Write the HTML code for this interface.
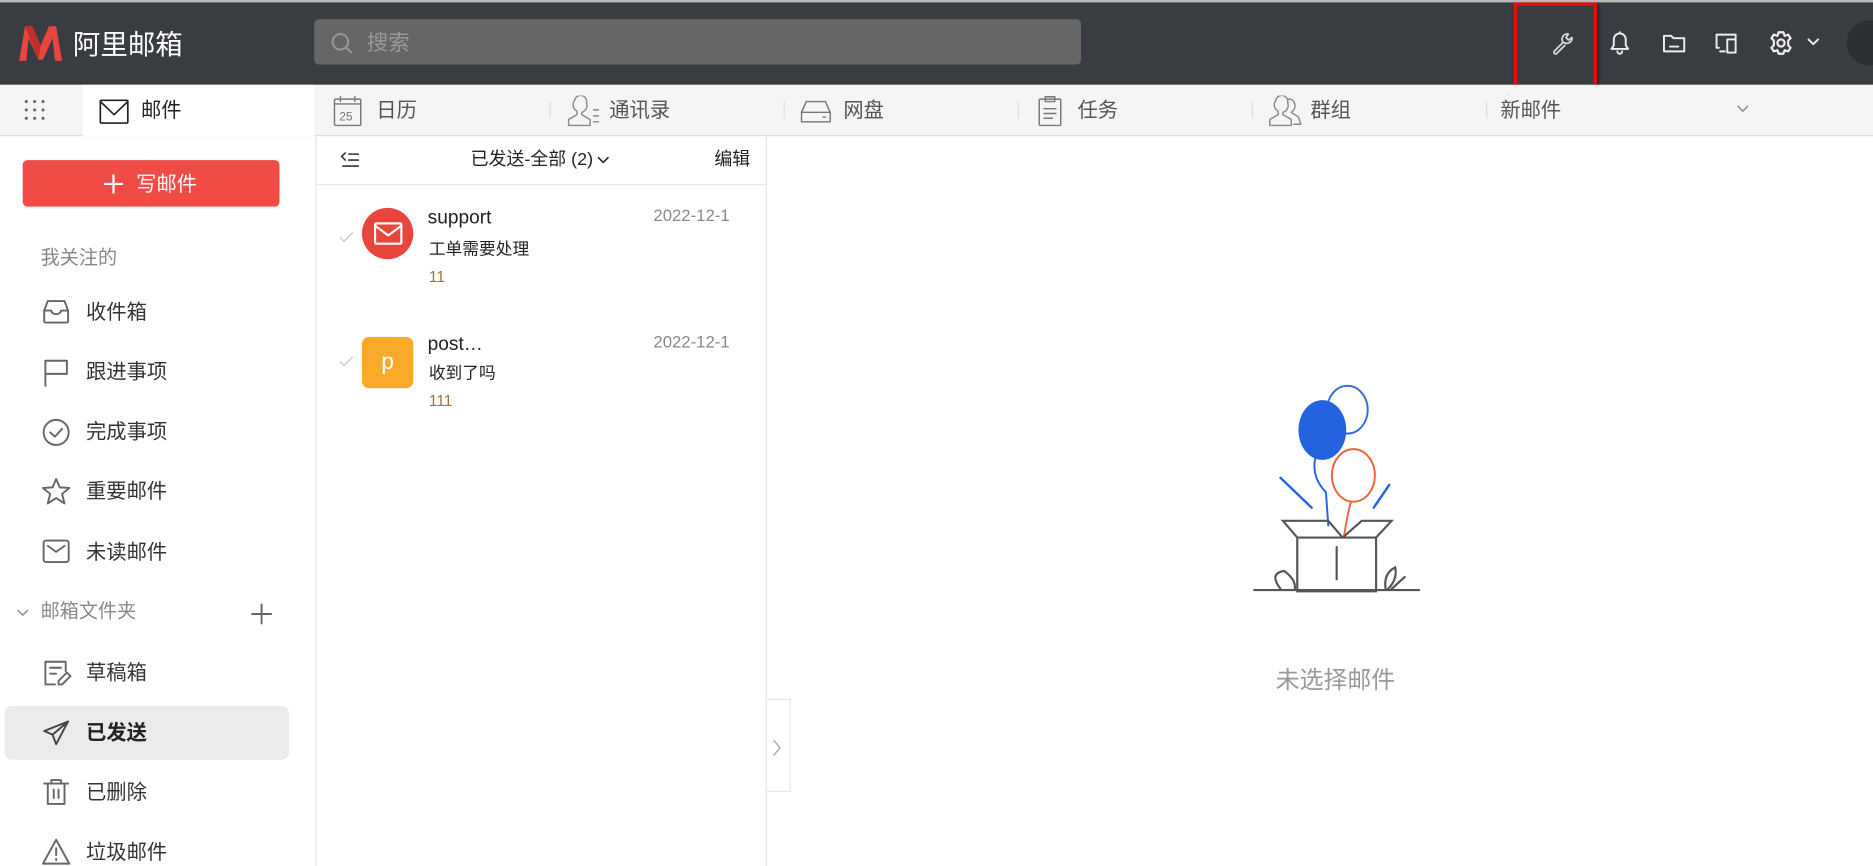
<!DOCTYPE html>
<html><head><meta charset="utf-8"><style>
html,body{margin:0;padding:0;width:1873px;height:865px;overflow:hidden;background:#fff}
#w{position:absolute;left:0;top:0;width:1568px;height:725px;transform:scale(1.19452);transform-origin:0 0;font-family:"Liberation Sans","Noto Sans CJK SC",sans-serif;color:#333}
.a{position:absolute}
.ic{position:absolute;fill:none;stroke:#666;stroke-width:1.6;stroke-linecap:round;stroke-linejoin:round}
.t{position:absolute;font-size:17px;color:#333;white-space:nowrap;line-height:20px}
.tab{position:absolute;top:83px;font-size:17px;color:#555;line-height:20px}
.sep{position:absolute;top:85px;width:1px;height:14px;background:#ddd}
</style></head><body><div id="w">
<div class="a" style="left:0;top:0;width:1568px;height:71px;background:#393d42;border-top:2px solid #bbb;box-sizing:border-box"></div>
<svg class="a" style="left:14px;top:20px" width="40" height="32" viewBox="0 0 40 32"><path d="M2 31 L7 2 L13 2 L20 18 L27 2 L33 2 L38 31 L32 31 L30 12 L22 30 L18 30 L10 12 L8 31 Z" fill="#e8453c"/><path d="M7 2 L13 2 L20 18 L18 30 Z" fill="#c0302a"/></svg>
<div class="a" style="left:61px;top:23px;font-size:23px;color:#fff;line-height:28px">阿里邮箱</div>
<div class="a" style="left:263px;top:16px;width:642px;height:38px;background:#666;border-radius:4px"></div>
<svg class="ic" style="left:276px;top:26px;stroke:#999" width="20" height="20"><circle cx="9" cy="9" r="6.5"/><path d="M14 14 L18 18"/></svg>
<div class="a" style="left:307px;top:25px;font-size:18px;color:#999;line-height:22px">搜索</div>
<div class="a" style="left:1267px;top:2px;width:64px;height:69px;border:3px solid #e01010;box-shadow:1px 2px 3px rgba(0,0,0,.5)"></div>
<svg class="ic" style="left:1297px;top:25px;stroke:#ddd;stroke-width:1.4" width="22" height="22"><path d="M4 18 L11.5 10.5 M11.5 10.5 A4.5 4.5 0 0 1 16 3.5 L14 6.5 L16 8.5 L19 6.5 A4.5 4.5 0 0 1 12 10.5 M4 18 A1.5 1.5 0 0 0 6 20 L13 13 "/></svg>
<svg class="ic" style="left:1345px;top:25px;stroke:#eee" width="22" height="22"><path d="M4 16 L18 16 L16 13 L16 8 A5 5 0 0 0 6 8 L6 13 Z M9 18 A2 2 0 0 0 13 18 M11 3 L11 2"/></svg>
<svg class="ic" style="left:1391px;top:26px;stroke:#eee" width="22" height="20"><path d="M2 4 L8 4 L10 6 L19 6 L19 17 L2 17 Z M7 13 L14 13"/></svg>
<svg class="ic" style="left:1435px;top:25px;stroke:#eee" width="22" height="22"><path d="M4 15 L2 15 L2 4 L18 4 L18 7 M5 18 L9 18 M11 8 L18 8 L18 19 L11 19 Z"/></svg>
<svg class="ic" style="left:1480px;top:25px;stroke:#eee;stroke-width:1.8" width="22" height="22"><circle cx="11" cy="11" r="3"/><path d="M9 2 L13 2 L14 5 L17 4 L19 7 L17 9 L17 13 L19 15 L17 18 L14 17 L13 20 L9 20 L8 17 L5 18 L3 15 L5 13 L5 9 L3 7 L5 4 L8 5 Z"/></svg>
<svg class="ic" style="left:1512px;top:31px;stroke:#eee" width="12" height="8"><path d="M2 2 L6 6 L10 2"/></svg>
<div class="a" style="left:1546px;top:17px;width:38px;height:38px;border-radius:50%;background:#2c2f33"></div>
<div class="a" style="left:0;top:71px;width:1568px;height:42px;background:#f5f5f5;border-bottom:1px solid #ddd"></div>
<svg class="a" style="left:20px;top:83px" width="20" height="20"><g fill="#666"><circle cx="2" cy="2" r="1.3"/><circle cx="9" cy="2" r="1.3"/><circle cx="16" cy="2" r="1.3"/><circle cx="2" cy="9" r="1.3"/><circle cx="9" cy="9" r="1.3"/><circle cx="16" cy="9" r="1.3"/><circle cx="2" cy="16" r="1.3"/><circle cx="16" cy="16" r="1.3"/><circle cx="9" cy="16" r="1.3"/></g></svg>
<div class="a" style="left:69px;top:71px;width:194px;height:43px;background:#fff"></div>
<svg class="ic" style="left:83px;top:83px;stroke:#222;stroke-width:1.4" width="26" height="22"><rect x="1" y="1" width="23" height="19" rx="1"/><path d="M1 2 L12.5 13 L24 2"/></svg>
<div class="tab" style="left:118px;color:#222">邮件</div>
<svg class="ic" style="left:278px;top:79px;stroke:#777;stroke-width:1.2" width="26" height="28"><rect x="2" y="4" width="22" height="22" rx="1"/><path d="M2 8 L24 8 M7 2 L7 6 M19 2 L19 6"/><text x="6" y="22" font-size="10" fill="#777" stroke="none" font-family="Liberation Sans">25</text></svg>
<div class="tab" style="left:315px">日历</div>
<div class="sep" style="left:460px"></div>
<svg class="ic" style="left:473px;top:80px;stroke:#888;stroke-width:1.2" width="32" height="26"><path d="M3 25 L3 20 L10 16 L10 13 A6 6 0 0 1 8 4 A5 5 0 0 1 18 6 A6 6 0 0 1 14 14 L14 16 L21 20 L21 25 Z M24 12 L28 12 M24 17 L28 17 M24 22 L28 22"/></svg>
<div class="tab" style="left:510px">通讯录</div>
<div class="sep" style="left:656px"></div>
<svg class="ic" style="left:669px;top:82px;stroke:#777;stroke-width:1.2" width="28" height="22"><path d="M2 12 L6 3 L22 3 L26 12 L26 20 L2 20 Z M2 12 L26 12 M20 16 L22 16"/></svg>
<div class="tab" style="left:706px">网盘</div>
<div class="sep" style="left:852px"></div>
<svg class="ic" style="left:868px;top:79px;stroke:#777;stroke-width:1.2" width="22" height="28"><rect x="2" y="4" width="18" height="22" rx="1"/><rect x="7" y="2" width="8" height="4"/><path d="M6 12 L16 12 M6 16 L16 16 M6 20 L13 20"/></svg>
<div class="tab" style="left:902px">任务</div>
<div class="sep" style="left:1048px"></div>
<svg class="ic" style="left:1060px;top:80px;stroke:#888;stroke-width:1.2" width="32" height="26"><path d="M3 25 L3 20 L10 16 L10 13 A6 6 0 0 1 8 4 A5 5 0 0 1 18 6 A6 6 0 0 1 14 14 L14 16 L21 20 L21 25 Z M18 3 A5 5 0 0 1 24 8 A6 6 0 0 1 21 14 L27 18 L29 24 L23 24"/></svg>
<div class="tab" style="left:1097px">群组</div>
<div class="sep" style="left:1244px"></div>
<div class="tab" style="left:1256px">新邮件</div>
<svg class="ic" style="left:1453px;top:87px;stroke:#888;stroke-width:1.2" width="12" height="8"><path d="M2 2 L6 6 L10 2"/></svg>
<div class="a" style="left:264px;top:114px;width:1px;height:611px;background:#e6e6e6"></div>
<div class="a" style="left:641px;top:114px;width:1px;height:611px;background:#e6e6e6"></div>
<div class="a" style="left:19px;top:134px;width:215px;height:39px;background:#f04b45;border-radius:4px"></div>
<svg class="a" style="left:86px;top:145px" width="18" height="18"><path d="M9 1 L9 17 M1 9 L17 9" stroke="#fff" stroke-width="1.8"/></svg>
<div class="a" style="left:114px;top:145px;font-size:17px;color:#fff;line-height:20px">写邮件</div>
<div class="t" style="left:34px;top:207px;font-size:16px;color:#888">我关注的</div>
<svg class="ic" style="left:35px;top:250px" width="24" height="22"><path d="M2 10 L5 2 L19 2 L22 10 L22 19 A1 1 0 0 1 21 20 L3 20 A1 1 0 0 1 2 19 Z M2 10 L8 10 A4 3 0 0 0 16 10 L22 10"/></svg>
<div class="t" style="left:72px;top:252px">收件箱</div>
<svg class="ic" style="left:36px;top:300px" width="24" height="24"><path d="M2 23 L2 2 L20 2 L20 13 L2 13"/></svg>
<div class="t" style="left:72px;top:302px">跟进事项</div>
<svg class="ic" style="left:35px;top:350px" width="24" height="24"><circle cx="12" cy="12" r="10.5"/><path d="M7 12 L11 15.5 L17 9"/></svg>
<div class="t" style="left:72px;top:352px">完成事项</div>
<svg class="ic" style="left:34px;top:399px" width="26" height="25"><path d="M13 2 L16 9 L24 9.5 L18 14.5 L20 22.5 L13 18 L6 22.5 L8 14.5 L2 9.5 L10 9 Z"/></svg>
<div class="t" style="left:72px;top:402px">重要邮件</div>
<svg class="ic" style="left:35px;top:451px" width="24" height="22"><rect x="1.5" y="1.5" width="21" height="18" rx="2"/><path d="M5 6 L12 11 L19 6"/></svg>
<div class="t" style="left:72px;top:453px">未读邮件</div>
<svg class="ic" style="left:14px;top:509px;stroke:#888;stroke-width:1.2" width="10" height="8"><path d="M1 2 L5 6 L9 2"/></svg>
<div class="t" style="left:34px;top:503px;font-size:16px;color:#888">邮箱文件夹</div>
<svg class="ic" style="left:209px;top:504px;stroke:#666" width="20" height="20"><path d="M10 2 L10 18 M2 10 L18 10"/></svg>
<svg class="ic" style="left:36px;top:552px" width="24" height="24"><path d="M19 10 L19 2 L2 2 L2 21 L10 21 M6 7 L15 7 M6 12 L11 12 M13 21 L13 18 L20 11 L23 14 L16 21 Z"/></svg>
<div class="t" style="left:72px;top:554px">草稿箱</div>
<div class="a" style="left:4px;top:591px;width:238px;height:45px;background:#ebebeb;border-radius:6px"></div>
<svg class="ic" style="left:35px;top:602px;stroke:#444" width="24" height="24"><path d="M22 2 L2 10 L9 13 L12 21 Z M22 2 L9 13"/></svg>
<div class="t" style="left:72px;top:604px;font-weight:bold;color:#222">已发送</div>
<svg class="ic" style="left:36px;top:651px" width="22" height="24"><path d="M1 5 L21 5 M7 5 L7 2 L15 2 L15 5 M4 5 L4 22 L18 22 L18 5 M9 10 L9 17 M13 10 L13 17"/></svg>
<div class="t" style="left:72px;top:654px">已删除</div>
<svg class="ic" style="left:34px;top:701px" width="26" height="24"><path d="M13 2 L24 22 L2 22 Z M13 9 L13 15 M13 18 L13 19"/></svg>
<div class="t" style="left:72px;top:704px">垃圾邮件</div>
<div class="a" style="left:265px;top:154px;width:376px;height:1px;background:#e6e6e6"></div>
<svg class="ic" style="left:284px;top:126px;stroke:#333;stroke-width:1.3" width="18" height="16"><path d="M5 2 L2 5 L5 8 M8 3 L16 3 M8 8 L16 8 M3 13 L16 13"/></svg>
<div class="a" style="left:394px;top:125px;font-size:15px;color:#222;line-height:18px">已发送-全部 (2)</div>
<svg class="ic" style="left:500px;top:131px;stroke:#222;stroke-width:1.3" width="10" height="7"><path d="M1 1 L5 5 L9 1"/></svg>
<div class="a" style="left:598px;top:125px;font-size:15px;color:#222;line-height:18px">编辑</div>
<svg class="ic" style="left:284px;top:194px;stroke:#ccc;stroke-width:1.2" width="12" height="10"><path d="M1 5 L4 8 L11 1"/></svg>
<div class="a" style="left:303px;top:174px;width:43px;height:43px;border-radius:50%;background:#e8453c"></div>
<svg class="ic" style="left:313px;top:186px;stroke:#fff;stroke-width:1.8" width="24" height="20"><rect x="1" y="1" width="22" height="17" rx="1"/><path d="M1 3 L12 11 L23 3"/></svg>
<div class="a" style="left:358px;top:173px;font-size:16px;color:#222;line-height:20px">support</div>
<div class="a" style="left:547px;top:172px;font-size:14px;color:#888;line-height:17px">2022-12-1</div>
<div class="a" style="left:359px;top:200px;font-size:14px;color:#222;line-height:17px">工单需要处理</div>
<div class="a" style="left:359px;top:224px;font-size:13px;color:#a07040;line-height:15px">11</div>
<svg class="ic" style="left:284px;top:298px;stroke:#ccc;stroke-width:1.2" width="12" height="10"><path d="M1 5 L4 8 L11 1"/></svg>
<div class="a" style="left:303px;top:282px;width:43px;height:43px;border-radius:6px;background:#f9aa2a;color:#fff;font-size:19px;text-align:center;line-height:43px">p</div>
<div class="a" style="left:358px;top:279px;font-size:16px;color:#222;line-height:20px">post…</div>
<div class="a" style="left:547px;top:278px;font-size:14px;color:#888;line-height:17px">2022-12-1</div>
<div class="a" style="left:359px;top:304px;font-size:14px;color:#222;line-height:17px">收到了吗</div>
<div class="a" style="left:359px;top:328px;font-size:13px;color:#a07040;line-height:15px">111</div>
<div class="a" style="left:642px;top:585px;width:20px;height:78px;border:1px solid #e6e6e6;border-left:none;box-sizing:border-box;background:#fff"></div>
<svg class="ic" style="left:646px;top:618px;stroke:#aaa;stroke-width:1.2" width="10" height="16"><path d="M2 2 L7 8 L2 14"/></svg>
<svg class="a" style="left:1045px;top:315px" width="150" height="190" viewBox="1045 315 150 190" fill="none" stroke-linecap="round" stroke-width="2">
<ellipse cx="1128" cy="343" rx="17" ry="20" stroke="#2d6be0" stroke-width="1.6"/>
<ellipse cx="1107" cy="360" rx="20" ry="25" fill="#2463e0"/>
<path d="M1101 384 Q1098 400 1110 412 L1112 440" stroke="#2463e0" stroke-width="1.6"/>
<ellipse cx="1133" cy="398" rx="18" ry="22" stroke="#f0643c" stroke-width="1.6"/>
<path d="M1131 420 Q1128 430 1125 450" stroke="#f0643c" stroke-width="1.6"/>
<path d="M1072 400 L1098 425 M1163 406 L1150 425" stroke="#2463e0"/>
<g stroke="#555" stroke-width="1.8"><path d="M1086 450 L1086 495 L1152 495 L1152 450 Z M1086 450 L1074 436 L1112 436 L1124 450 M1124 450 L1140 436 L1165 436 L1152 450 M1119 458 L1119 485 M1050 494 L1188 494"/>
<path d="M1072 493 Q1062 480 1075 478 Q1085 485 1084 493 M1160 493 Q1158 480 1168 475 Q1170 485 1162 493 M1165 493 L1176 483"/></g>
</svg>
<div class="a" style="left:1040px;top:557px;width:156px;text-align:center;font-size:20px;color:#999;line-height:26px">未选择邮件</div>
</div></body></html>
